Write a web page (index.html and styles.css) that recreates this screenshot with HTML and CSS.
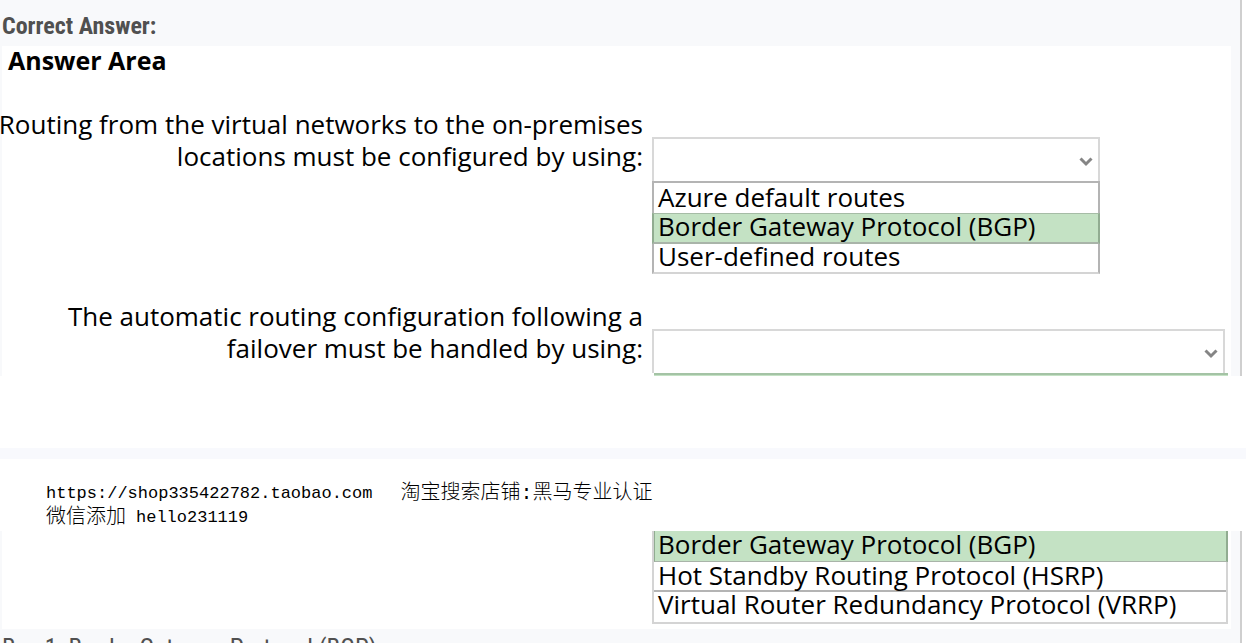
FILE: index.html
```html
<!DOCTYPE html>
<html lang="en">
<head>
<meta charset="utf-8">
<title>Answer Area</title>
<link rel="stylesheet" href="styles.css">
</head>
<body>
<main class="document">
  <section class="sheet">
    <h2 class="heading">Correct Answer:</h2>
    <div class="card card-first">
      <h3 class="title">Answer Area</h3>
      <div class="question">
        <label class="prompt" for="routing"><span>Routing from the virtual networks to the on-premises</span> <span>locations must be configured by using:</span></label>
        <div class="answer answer-short">
          <div class="picker">
            <select class="select" id="routing"><option></option></select>
            <svg class="chevron" viewBox="0 0 14 10" aria-hidden="true"><path d="M1.5 1.5 7 7 12.5 1.5"/></svg>
          </div>
          <ul class="options">
            <li class="option">Azure default routes</li>
            <li class="option chosen">Border Gateway Protocol (BGP)</li>
            <li class="option">User-defined routes</li>
          </ul>
        </div>
      </div>
      <div class="question question-last">
        <label class="prompt" for="failover"><span>The automatic routing configuration following a</span> <span>failover must be handled by using:</span></label>
        <div class="answer">
          <div class="picker">
            <select class="select" id="failover"><option></option></select>
            <svg class="chevron" viewBox="0 0 14 10" aria-hidden="true"><path d="M1.5 1.5 7 7 12.5 1.5"/></svg>
          </div>
          <div class="sliver"></div>
        </div>
      </div>
    </div>
  </section>
  <div class="page-end"></div>
  <header class="notice">
    <p class="notice-line"><span>https://shop335422782.taobao.com</span><span class="han">淘宝搜索店铺:黑马专业认证</span></p>
    <p class="notice-line notice-contact"><span class="han">微信添加</span><span>hello231119</span></p>
  </header>
  <section class="sheet">
    <div class="card card-rest">
      <div class="question">
        <ul class="options options-rest">
          <li class="option chosen">Border Gateway Protocol (BGP)</li>
          <li class="option">Hot Standby Routing Protocol (HSRP)</li>
          <li class="option">Virtual Router Redundancy Protocol (VRRP)</li>
        </ul>
      </div>
    </div>
    <p class="explanation">Box 1: Border Gateway Protocol (BGP)</p>
  </section>
</main>
</body>
</html>
```
FILE: styles.css
```css
* { box-sizing: border-box; }
html, body { margin: 0; }
body {
  height: 100vh;
  overflow: hidden;
  background: #fff;
  color: #000;
  font-family: "Open Sans", "Noto Sans", sans-serif;
}
h2, h3, p, ul { margin: 0; padding: 0; list-style: none; }

.sheet {
  margin-right: 4px;
  padding: 0 9px 0 2px;
  border-right: 2px solid #cfcfcf;
  background: #f8f9fb;
}
.heading {
  padding-top: 6px;
  font: 700 24px/40px "Roboto Condensed", Roboto, sans-serif;
  color: #505050;
}
.card { background: #fff; }
.title {
  padding-left: 6px;
  font-size: 25px;
  line-height: 28px;
}
.question {
  display: grid;
  grid-template-columns: minmax(0, 641fr) minmax(0, 579fr);
  column-gap: 9px;
  align-items: start;
  white-space: nowrap;
  font-size: 26px;
}
.card-first .question { padding-top: 34px; }
.card-first .question-last { padding-top: 26px; }
.prompt {
  display: flex;
  flex-direction: column;
  align-items: flex-end;
  line-height: 32px;
}
.answer {
  padding-top: 29px;
  margin-right: 3px;
}
.answer-short { width: 77.4%; }
.picker { position: relative; margin-right: 3px; }
.answer-short .picker { margin-right: 0; }
.select {
  display: block;
  width: 100%;
  height: 44px;
  border: 2px solid #d8d8d8;
  border-bottom: 0;
  border-radius: 0;
  background: #fff;
  appearance: none;
  font: inherit;
}
.chevron {
  position: absolute;
  right: 7px;
  top: 20px;
  width: 14px;
  height: 10px;
  fill: none;
  stroke: #858585;
  stroke-width: 3;
}
.options {
  border: 2px solid #b4b4b4;
  border-bottom-color: #d4d4d4;
  line-height: 28px;
}
.option {
  height: 30px;
  padding-left: 4px;
}
.chosen {
  height: 31px;
  margin: 0 -2px;
  background: #c4e2c4;
  border: 0 solid #91ac91;
  border-top: 1px solid #a6bca6;
  border-bottom: 2px solid #a9b4a9;
  border-left-width: 2px;
  border-right-width: 2px;
  line-height: 24px;
}
.chosen + .option { line-height: 24px; height: 28px; }
.sliver {
  height: 3px;
  margin-left: 2px;
  border-top: 2px solid #a4c3a5;
  background: #c4e2c4;
}
.page-end {
  height: 11px;
  margin-top: 72px;
  background: #f8f9fd;
}
.notice {
  padding: 23px 0 1px 46px;
  font: 17px/24px "Liberation Mono", monospace;
}
.notice-line { display: flex; gap: 28px; }
.notice-contact { gap: 10px; }
.han {
  font-family: "Liberation Mono", "Noto Sans CJK SC", sans-serif;
  font-size: 20px;
  font-weight: 300;
}
.options-rest {
  grid-column: 2;
  margin-right: 3px;
  border-color: #d4d4d4;
  border-top: 0;
}
.options-rest .chosen {
  margin-left: 0;
  padding-left: 3px;
  border-top: 0;
  border-bottom-width: 1px;
  border-left-width: 1px;
  line-height: 26px;
}
.options-rest .chosen + .option { line-height: 26px; }
.options-rest .option:last-child {
  height: 32px;
  border-top: 2px solid #b4b4b4;
  line-height: 24px;
}
.card-rest { padding-bottom: 5px; }
.explanation {
  padding-top: 6px;
  font: 25px/28px "Roboto Condensed", Roboto, sans-serif;
  color: #505050;
}
```
